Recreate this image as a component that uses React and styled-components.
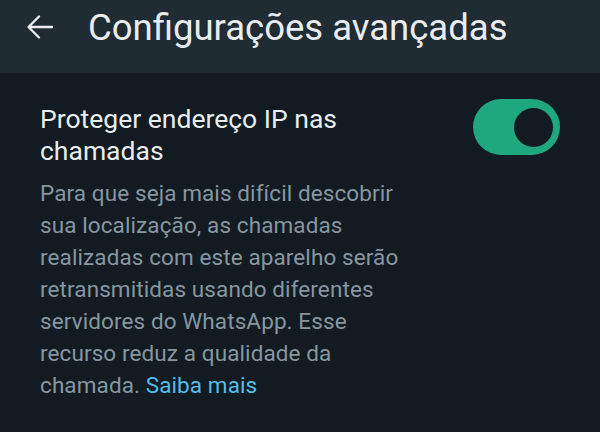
import React from "react";
import styled, { createGlobalStyle } from "styled-components";

const GlobalStyle = createGlobalStyle`
  html, body {
    margin: 0;
    padding: 0;
    background: #111b21;
  }
  body {
    font-family: Roboto, "Noto Sans", sans-serif;
    -webkit-font-smoothing: antialiased;
  }
`;

const Page = styled.div`
  width: 600px;
  height: 432px;
  background: #111b21;
  overflow: hidden;
`;

const TopBar = styled.header`
  align-items: flex-start;
  background: #1f2c34;
  box-sizing: border-box;
  display: flex;
  height: 73px;
  padding: 6px 0 0 26px;
`;

const BackButton = styled.button`
  align-items: center;
  background: none;
  border: 0;
  display: flex;
  height: 41px;
  justify-content: center;
  margin: 0 34px 0 0;
  padding: 0;
  width: 28px;
`;

const Title = styled.h1`
  color: #e9edef;
  font-size: 36.5px;
  font-weight: 400;
  line-height: 44px;
  margin: 0;
`;

const Setting = styled.section`
  display: flex;
  justify-content: space-between;
  padding: 30px 40px 0 40px;
`;

const Texts = styled.div`
  width: 375px;
`;

const Label = styled.div`
  color: #e9edef;
  font-size: 26.5px;
  line-height: 32px;
`;

const Description = styled.p`
  color: #8696a0;
  font-size: 22.5px;
  letter-spacing: 0.1px;
  line-height: 32px;
  margin: 10px 0 0;
`;

const Link = styled.a`
  color: #53bdeb;
  text-decoration: none;
`;

const Toggle = styled.div`
  align-items: center;
  background: ${(props) => (props.on ? "#1fa87e" : "#3b4a54")};
  border-radius: 28px;
  box-sizing: border-box;
  display: flex;
  flex-shrink: 0;
  height: 56px;
  justify-content: ${(props) => (props.on ? "flex-end" : "flex-start")};
  margin: -4px 0 0;
  padding: 0 7px;
  width: 87px;

  span {
    background: #111b21;
    border-radius: 50%;
    display: block;
    height: 39px;
    width: 39px;
  }
`;

export default function App() {
  return (
    <Page>
      <GlobalStyle />
      <TopBar>
        <BackButton aria-label="Voltar">
          <svg width="26" height="24" viewBox="0 0 26 24" fill="none">
            <path
              d="M25 12H2M12 1.5L1.5 12 12 22.5"
              stroke="#e9edef"
              strokeWidth="2.3"
              strokeLinecap="round"
              strokeLinejoin="round"
            />
          </svg>
        </BackButton>
        <Title>Configurações avançadas</Title>
      </TopBar>
      <Setting>
        <Texts>
          <Label>Proteger endereço IP nas chamadas</Label>
          <Description>
            Para que seja mais difícil descobrir sua localização, as chamadas
            realizadas com este aparelho serão retransmitidas usando diferentes
            servidores do WhatsApp. Esse recurso reduz a qualidade da chamada.{" "}
            <Link href="#">Saiba mais</Link>
          </Description>
        </Texts>
        <Toggle on>
          <span />
        </Toggle>
      </Setting>
    </Page>
  );
}
